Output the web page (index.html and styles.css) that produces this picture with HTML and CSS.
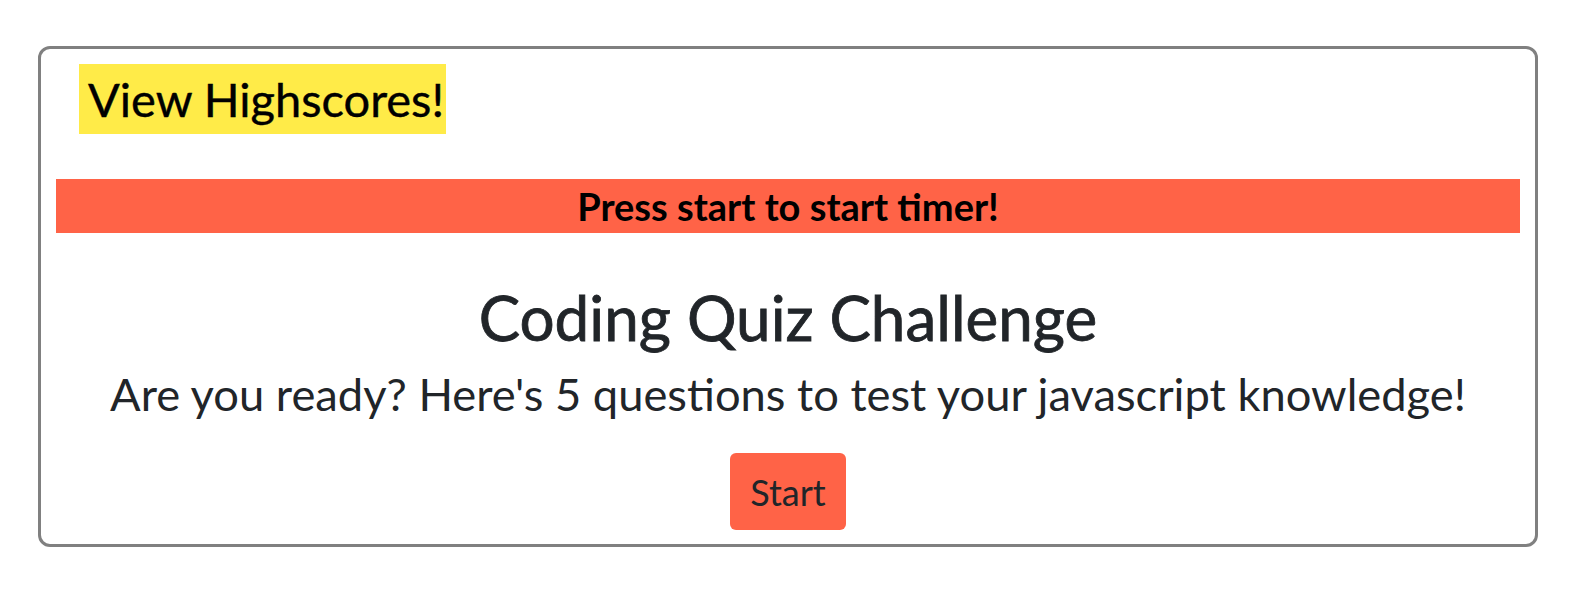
FILE: index.html
```html
<!DOCTYPE html>
<html lang="en">
<head>
<meta charset="utf-8">
<title>Coding Quiz Challenge</title>
<link rel="stylesheet" href="styles.css">
</head>
<body>
  <main class="card">
    <header class="top">
      <a class="highscores" href="#">View Highscores!</a>
    </header>
    <div class="timer">Press start to start timer!</div>
    <section class="intro">
      <h1 class="title">Coding Quiz Challenge</h1>
      <p class="lead">Are you ready? Here's 5 questions to test your javascript knowledge!</p>
      <button class="start" type="button">Start</button>
    </section>
  </main>
</body>
</html>
```

FILE: styles.css
```css
html, body {
  margin: 0;
  padding: 0;
  background: #ffffff;
}

body {
  font-family: Lato, "Open Sans", "Liberation Sans", sans-serif;
  color: #212529;
}

.card {
  box-sizing: border-box;
  width: 1500px;
  height: 501px;
  margin: 46px 0 0 38px;
  border: 3px solid #808080;
  border-radius: 12px;
  padding: 15px 15px 0 15px;
  display: flex;
  flex-direction: column;
}

.top {
  display: flex;
  padding-left: 23px;
}

.highscores {
  display: flex;
  align-items: center;
  height: 70px;
  width: 367px;
  box-sizing: border-box;
  padding-left: 9px;
  background: #ffeb48;
  color: #000000;
  text-decoration: none;
  font-size: 47px;
  -webkit-text-stroke: 0.4px #000000;
}

.timer {
  margin-top: 45px;
  height: 54px;
  background: #ff6347;
  color: #000000;
  font-weight: 700;
  font-size: 38px;
  display: flex;
  align-items: center;
  justify-content: center;
}

.intro {
  display: flex;
  flex-direction: column;
  align-items: center;
}

.title {
  margin: 48px 0 0 0;
  font-size: 62px;
  font-weight: 400;
  line-height: 72px;
  -webkit-text-stroke: 0.8px #212529;
}

.lead {
  margin: 14px 0 0 0;
  font-size: 45.3px;
  line-height: 54px;
}

.start {
  margin-top: 32px;
  width: 116px;
  height: 77px;
  border: none;
  border-radius: 6px;
  background: #ff6347;
  color: #212529;
  font-family: inherit;
  font-size: 36px;
  padding: 0;
}
```
